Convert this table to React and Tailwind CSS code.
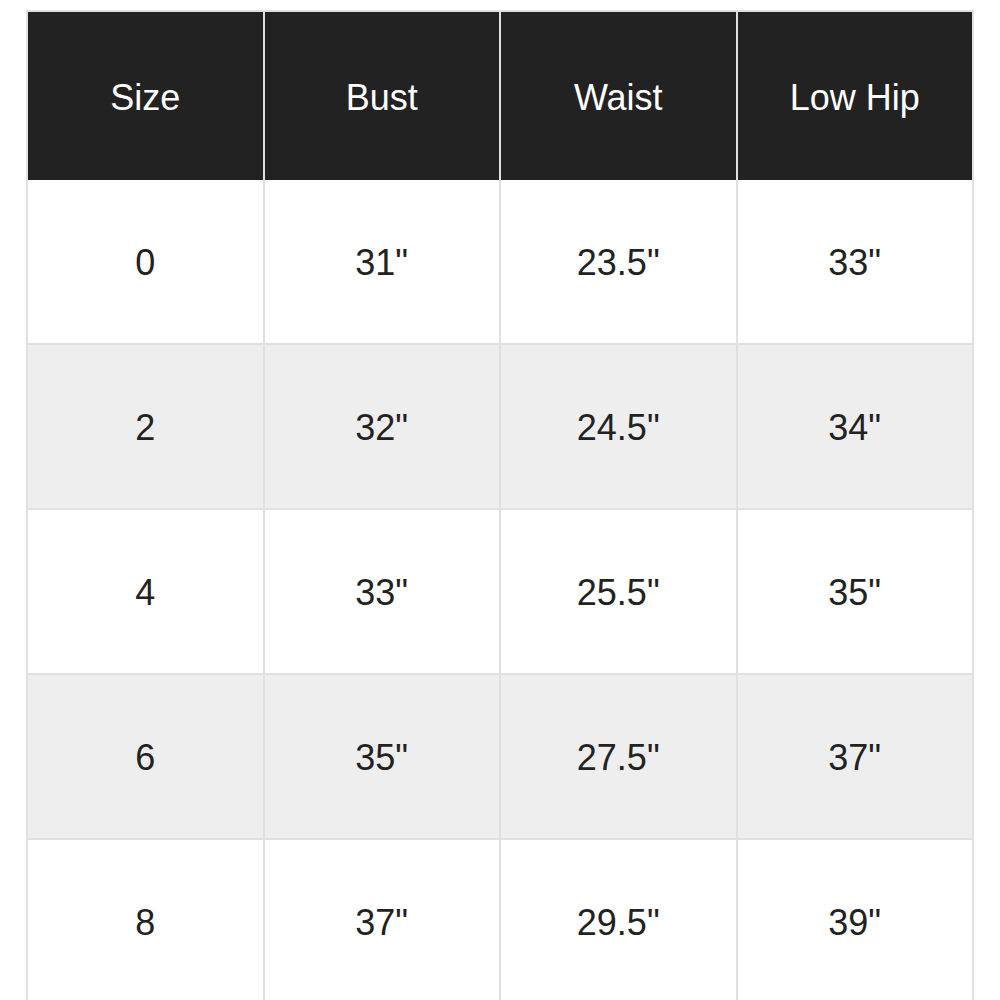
const headers = ['Size', 'Bust', 'Waist', 'Low Hip'];

const rows = [
    ['0', '31"', '23.5"', '33"'],
    ['2', '32"', '24.5"', '34"'],
    ['4', '33"', '25.5"', '35"'],
    ['6', '35"', '27.5"', '37"'],
    ['8', '37"', '29.5"', '39"'],
];

export default function App() {
    return (
        <div className="min-h-screen bg-white pl-[26px] pt-[10px] font-['Liberation_Sans',Arial,sans-serif]">
            <div className="w-[948px] bg-[#e0e0e0] px-[2px] pt-[2px] flex flex-col">
                <div className="grid grid-cols-4 gap-x-[2px]">
                    {headers.map((h) => (
                        <div key={h} className="h-[168px] pt-[3px] bg-[#222222] text-white text-[36px] flex items-center justify-center">
                            {h}
                        </div>
                    ))}
                </div>
                <div className="grid grid-cols-4 gap-[2px]">
                    {rows.map((row, i) =>
                        row.map((cell, j) => (
                            <div
                                key={`${i}-${j}`}
                                className={`h-[163px] pt-[3px] text-[#222222] text-[36px] flex items-center justify-center ${i % 2 ? 'bg-[#eeeeee]' : 'bg-white'}`}
                            >
                                {cell}
                            </div>
                        ))
                    )}
                </div>
            </div>
        </div>
    );
}
